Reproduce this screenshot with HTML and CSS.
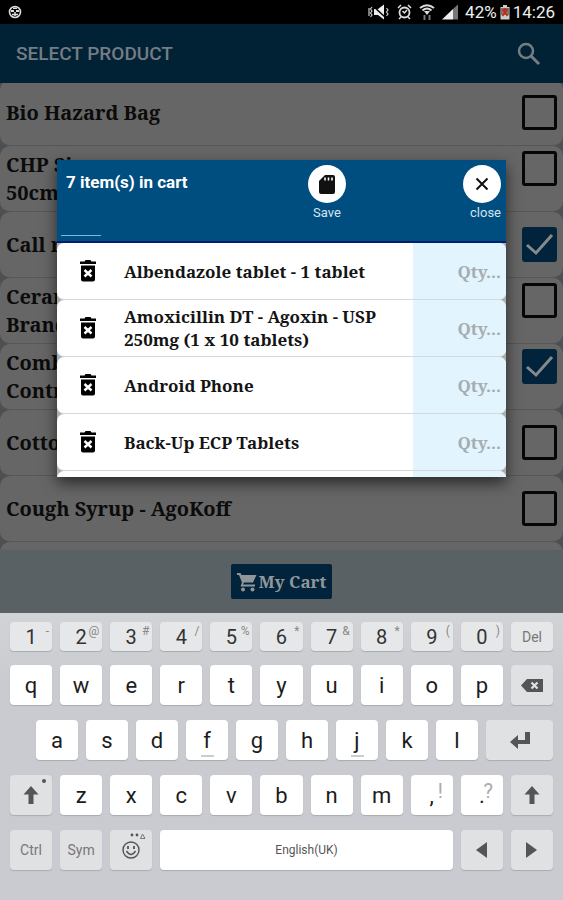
FILE: index.html
```html
<!DOCTYPE html>
<html lang="en">
<head>
<meta charset="utf-8">
<meta name="viewport" content="width=device-width, initial-scale=1">
<title>Select product</title>
<link rel="stylesheet" href="styles.css">
</head>
<body>
<svg class="defs" aria-hidden="true">
  <symbol id="trash" viewBox="0 0 18 22"><path d="M1 1.500h4.500L6.500 0h5l1 1.500H17V4H1zM2 5.500h14V19.500a2 2 0 0 1-2 2H4a2 2 0 0 1-2-2z"/><path d="M5.500 10l7 6.500m0-6.500l-7 6.500" stroke="#fff" stroke-width="2.400"/></symbol>
  <symbol id="shift" viewBox="0 0 16 20"><path d="M8 1l7.500 8.500h-5V19h-5V9.500h-5z"/></symbol>
</svg>
<div class="app">
  <header class="status">
    <svg class="face" viewBox="0 0 14 14"><circle cx="7" cy="7" r="5.500" fill="none" stroke="#ddd" stroke-width="1.600"/><path d="M3 5h3v2H3zM8 5h3v2H8zM5 2.500h4V4H5z" fill="#ddd"/><path d="M4 9.500h6M7 7v4" fill="none" stroke="#ddd" stroke-width="1.500"/></svg>
    <span class="status-right">
      <svg width="22" height="16" viewBox="0 0 22 16"><path d="M6 5h4l6-4.500v15L10 11H6z" fill="#eee"/><path d="M5 2l12 11" stroke="#000" stroke-width="1.500"/><path d="M4 3L2.500 5 4 7 2.500 9 4 11 2.500 13M1 4v8M18.500 4L20 6l-1.500 2 1.500 2-1.500 2" fill="none" stroke="#ccc" stroke-width="1.200"/></svg>
      <svg width="15" height="16" viewBox="0 0 15 16"><circle cx="7.500" cy="8.500" r="5" fill="none" stroke="#ddd" stroke-width="1.800"/><path d="M1 4l3-3m7 0l3 3M4 13l-2 2m9-2l2 2M5.500 7l2 2 2.500-3" fill="none" stroke="#ddd" stroke-width="1.500"/></svg>
      <svg width="16" height="17" viewBox="0 0 16 17"><path d="M1 4q7-5.500 14 0M3.500 6.500q4.500-4 9 0" fill="none" stroke="#ddd" stroke-width="2"/><path d="M5 7h6l-3 4z" fill="#ddd"/><path d="M5.500 16v-5M10.500 11v5" stroke="#777" stroke-width="2"/></svg>
      <svg width="16" height="16" viewBox="0 0 16 16"><path d="M0 15.500L11 5v10.500z" fill="#eee"/><path d="M11 5l5-4.500v15h-5z" fill="#777"/></svg>
      <span class="clock">42%
      <svg width="10" height="16" viewBox="0 0 10 16"><path d="M3 1h4v2h2.500v12.500h-9V3H3z" fill="#ccc"/><path d="M1 4h8v7H1z" fill="#777"/><path d="M2.500 5l5 7m0-7l-5 7M5 4v4" stroke="#c22b16" stroke-width="1.800"/></svg>
      <time>14:26</time></span>
    </span>
  </header>
  <div class="toolbar">
    <h1>SELECT PRODUCT</h1>
    <button class="plain" aria-label="Search"><svg width="24" height="24" viewBox="0 0 24 24" fill="none" stroke="#747d83"><circle cx="9" cy="9" r="7" stroke-width="2.500"/><path d="M14 14l8 8" stroke-width="3"/></svg></button>
  </div>
  <main class="products">
    <label class="product"><span>Bio Hazard Bag</span><input type="checkbox"></label>
    <label class="product tall"><span>CHP Si<br>50cm</span><input type="checkbox"></label>
    <label class="product"><span>Call r</span><input type="checkbox" checked></label>
    <label class="product tall"><span>Ceram<br>Brand</span><input type="checkbox"></label>
    <label class="product tall"><span>Comb<br>Contr</span><input type="checkbox" checked></label>
    <label class="product"><span>Cotton</span><input type="checkbox"></label>
    <label class="product"><span>Cough Syrup - AgoKoff</span><input type="checkbox"></label>
    <div class="product"></div>
  </main>
  <footer class="cartbar">
    <button class="mycart"><svg width="20" height="20" viewBox="0 0 20 20" fill="#90979b"><path d="M0 1h3.500l1 2H19.500l-3.500 7.500H7l-1 2h12v2H3.500l1.500-4L2 3H0z"/><circle cx="6" cy="17.500" r="2"/><circle cx="15.500" cy="17.500" r="2"/></svg>My Cart</button>
  </footer>

  <section class="dialog" role="dialog" aria-labelledby="cart-title">
    <header class="dialog-head">
      <div class="title"><h2 id="cart-title">7 item(s) in cart</h2><input class="filter" type="text" aria-label="Filter"></div>
      <button class="action save"><i><svg width="16" height="19" viewBox="0 0 16 19"><path d="M6 0h8a2 2 0 0 1 2 2v15a2 2 0 0 1-2 2H2a2 2 0 0 1-2-2V6z" fill="#111"/><path d="M6 2.500v3m3.500-3v3m3.500-3v3" stroke="#fff" stroke-width="1.600"/></svg></i>Save</button>
      <button class="action close"><i><svg width="14" height="14" viewBox="0 0 14 14"><path d="M1.500 1.500l11 11m0-11l-11 11" stroke="#111" stroke-width="2"/></svg></i>close</button>
    </header>
    <div class="items">
      <div class="item"><button class="plain" aria-label="Delete"><svg width="18" height="22"><use href="#trash"/></svg></button><label for="q1">Albendazole tablet - 1 tablet</label><input id="q1" type="text" placeholder="Qty..."></div>
      <div class="item"><button class="plain" aria-label="Delete"><svg width="18" height="22"><use href="#trash"/></svg></button><label for="q2">Amoxicillin DT - Agoxin - USP<br>250mg (1 x 10 tablets)</label><input id="q2" type="text" placeholder="Qty..."></div>
      <div class="item"><button class="plain" aria-label="Delete"><svg width="18" height="22"><use href="#trash"/></svg></button><label for="q3">Android Phone</label><input id="q3" type="text" placeholder="Qty..."></div>
      <div class="item"><button class="plain" aria-label="Delete"><svg width="18" height="22"><use href="#trash"/></svg></button><label for="q4">Back-Up ECP Tablets</label><input id="q4" type="text" placeholder="Qty..."></div>
      <div class="item"><span></span><span></span><input type="text" aria-label="Quantity"></div>
    </div>
  </section>
</div>

<div class="keyboard">
  <div class="keys numbers">
    <button>1<sup>-</sup></button><button>2<sup>@</sup></button><button>3<sup>#</sup></button><button>4<sup>/</sup></button><button>5<sup>%</sup></button><button>6<sup>*</sup></button><button>7<sup>&amp;</sup></button><button>8<sup>*</sup></button><button>9<sup>(</sup></button><button>0<sup>)</sup></button><button class="word">Del</button>
  </div>
  <div class="keys">
    <button>q</button><button>w</button><button>e</button><button>r</button><button>t</button><button>y</button><button>u</button><button>i</button><button>o</button><button>p</button>
    <button class="fn" aria-label="Backspace"><svg width="22" height="13" viewBox="0 0 22 13"><path d="M6 0h16v13H6L0 6.500z"/><path d="M10.500 3.500l6 6m0-6l-6 6" stroke="#e0e1e3" stroke-width="2.200"/></svg></button>
  </div>
  <div class="keys home">
    <button>a</button><button>s</button><button>d</button><button class="bump">f</button><button>g</button><button>h</button><button class="bump">j</button><button>k</button><button>l</button>
    <button class="fn" aria-label="Enter"><svg width="20" height="17" viewBox="0 0 20 17"><path d="M15 0h5v12H8v5L0 10 8 3v5h7z"/></svg></button>
  </div>
  <div class="keys">
    <button class="fn" aria-label="Shift"><svg width="16" height="20"><use href="#shift"/></svg><sup class="dot"><svg width="4" height="4" viewBox="0 0 4 4"><circle cx="2" cy="2" r="2"/></svg></sup></button><button>z</button><button>x</button><button>c</button><button>v</button><button>b</button><button>n</button><button>m</button><button class="punct">,<sup>!</sup></button><button class="punct">.<sup>?</sup></button>
    <button class="fn" aria-label="Shift"><svg width="16" height="20"><use href="#shift"/></svg></button>
  </div>
  <div class="keys">
    <button class="fn word">Ctrl</button><button class="fn word">Sym</button>
    <button class="fn" aria-label="Emoji"><svg width="18" height="18" viewBox="0 0 18 18" fill="none" stroke="#555"><circle cx="9" cy="9" r="8" stroke-width="1.400"/><path d="M4.500 10q4.500 7 9 0" stroke-width="1.400"/><path d="M6 5v3m6-3v3" stroke-width="1.800"/></svg><sup class="dots"><svg width="16" height="6" viewBox="0 0 16 6"><circle cx="2" cy="2" r="1.400"/><circle cx="7" cy="2" r="1.400"/><path d="M12.500 1L15 5.500h-4.500z" fill="none" stroke="#777"/></svg></sup></button>
    <button class="space">English(UK)</button>
    <button class="fn" aria-label="Left"><svg width="11" height="16" viewBox="0 0 11 16"><path d="M11 0v16L0 8z"/></svg></button>
    <button class="fn" aria-label="Right"><svg width="11" height="16" viewBox="0 0 11 16"><path d="M0 0v16l11-8z"/></svg></button>
  </div>
</div>
</body>
</html>
```

FILE: styles.css
```css
* { box-sizing: border-box; }
body {
  margin: 0;
  height: 100vh;
  display: flex;
  flex-direction: column;
  overflow: hidden;
  font-family: Roboto, sans-serif;
}
button { border: 0; padding: 0; margin: 0; font-family: inherit; }
h1, h2 { margin: 0; }
.defs { position: absolute; width: 0; height: 0; }
.plain { background: none; display: flex; align-items: center; justify-content: center; }

.app {
  position: relative;
  flex: 1;
  min-height: 0;
  display: flex;
  flex-direction: column;
  overflow: hidden;
}
.status {
  height: 24px;
  flex: none;
  display: flex;
  align-items: center;
  justify-content: space-between;
  padding: 0 8px;
  background: #000;
  color: #eee;
  font-size: 17px;
}
.face { width: 14px; height: 14px; }
.status-right { display: flex; align-items: center; gap: 7px; }
.clock { display: flex; align-items: center; gap: 3px; }
.toolbar {
  height: 59px;
  flex: none;
  display: flex;
  align-items: center;
  justify-content: space-between;
  padding: 0 22px 0 16px;
  background: #012135;
  color: #747d83;
}
.toolbar h1 { font-size: 19px; font-weight: 500; line-height: 24px; }

.products {
  flex: 1;
  min-height: 0;
  overflow: hidden;
  background: #4c5052;
  font: bold 20px/28px "Noto Serif", "DejaVu Serif", serif;
}
.product {
  height: 66px;
  display: flex;
  align-items: center;
  justify-content: space-between;
  padding: 0 6px;
  border-bottom: 1px solid #565858;
  border-radius: 10px;
  background: #666;
  color: #0b0b0b;
}
.product:first-child { margin-top: -3px; }
.product input {
  appearance: none;
  width: 35px;
  height: 35px;
  margin: 0;
  border: 3px solid #060606;
  border-radius: 3px;
}
.product.tall input { align-self: flex-start; margin-top: 5px; }
.product input:checked {
  border-color: #01233b;
  background: #01233b url("data:image/svg+xml,%3Csvg xmlns='http://www.w3.org/2000/svg' viewBox='0 0 29 29'%3E%3Cpath d='M2 15l9 8L27 5' fill='none' stroke='%23858a8d' stroke-width='3'/%3E%3C/svg%3E") center / 29px no-repeat;
}
.cartbar {
  height: 63px;
  flex: none;
  display: flex;
  align-items: center;
  justify-content: center;
  background: #596165;
}
.mycart {
  height: 35px;
  display: flex;
  align-items: center;
  gap: 2px;
  padding: 0 6px;
  border-radius: 2px;
  background: #01233b;
  color: #90979b;
  font: bold 17px/24px "Noto Serif", "DejaVu Serif", serif;
}

.dialog {
  position: absolute;
  top: 160px;
  right: 57px;
  bottom: 136px;
  left: 57px;
  display: flex;
  flex-direction: column;
  overflow: hidden;
  background: #fff;
  box-shadow: 0 6px 14px rgba(0, 0, 0, .6);
}
.dialog-head {
  height: 83px;
  flex: none;
  display: flex;
  align-items: flex-start;
  padding: 5px 5px 0 4px;
  border-bottom: 2px solid #001f70;
  background: #004d80;
  color: #fff;
}
.title { flex: 1; display: flex; flex-direction: column; align-items: flex-start; }
.title h2 { padding: 6px 0 0 5px; font-size: 17px; line-height: 22px; }
.filter {
  width: 40px;
  height: 43px;
  border: 0;
  border-bottom: 1px solid #7cb4dc;
  background: none;
}
.action {
  display: flex;
  flex-direction: column;
  align-items: center;
  gap: 1px;
  background: none;
  color: #d5e6f2;
  font-size: 13px;
  line-height: 18px;
}
.action i {
  width: 38px;
  height: 38px;
  display: flex;
  align-items: center;
  justify-content: center;
  border-radius: 50%;
  background: #fff;
}
.save { margin-right: 117px; }
.close { align-items: flex-end; }
.items { flex: 1; min-height: 0; overflow: hidden; background: #a9b0b4; }
.item {
  height: 57px;
  display: grid;
  grid-template-columns: 61px 1fr 93px;
  align-items: center;
  overflow: hidden;
  border-bottom: 1px solid #d4d8da;
  border-radius: 7px;
  background: #fff;
  color: #141414;
  font: bold 17px/23px "Noto Serif", "DejaVu Serif", serif;
}
.item label { padding-left: 6px; white-space: nowrap; }
.item input {
  width: 100%;
  height: 100%;
  border: 0;
  padding: 0 5px;
  background: #e2f4fd;
  font: inherit;
  text-align: right;
}
.item input::placeholder { color: #a5adb1; opacity: 1; }

.keyboard {
  flex: none;
  display: grid;
  gap: 15px;
  padding: 9px 10px 30px;
  background: linear-gradient(#d2d3d6, #c9cbd0 70px);
}
.keys { display: grid; grid-template-columns: repeat(11, 1fr); gap: 8px; }
.keys button {
  position: relative;
  min-width: 0;
  height: 40px;
  display: flex;
  align-items: center;
  justify-content: center;
  border-radius: 4px;
  background: #fff;
  box-shadow: 0 1px 1px #a9abb0;
  color: #1c1c1c;
  font-size: 22px;
}
.keys .fn { background: #e0e1e3; fill: #555; }
.keys.numbers { margin-bottom: -1px; }
.keys.numbers button { height: 29px; background: #e6e7e9; font-size: 20px; color: #333; }
.keys.numbers .word, .keys .word { font-size: 14px; color: #777; }
.keys sup {
  position: absolute;
  top: 3px;
  right: 3px;
  color: #888;
  font-size: 12px;
  line-height: 12px;
}
.keys .punct sup { top: 6px; right: 10px; font-size: 20px; line-height: 20px; color: #aaa; }
.keys .dot { top: 4px; right: 6px; }
.keys .dots { right: 6px; }
.keys .dot svg, .keys .dots svg { display: block; }
.keys.home { grid-template-columns: repeat(9, 42fr) 67fr; padding-left: 26px; }
.bump::after {
  content: "";
  position: absolute;
  bottom: 3px;
  width: 13px;
  height: 2px;
  background: #ccc;
}
.keys .space { grid-column: span 6; font-size: 12px; color: #555; }
```
